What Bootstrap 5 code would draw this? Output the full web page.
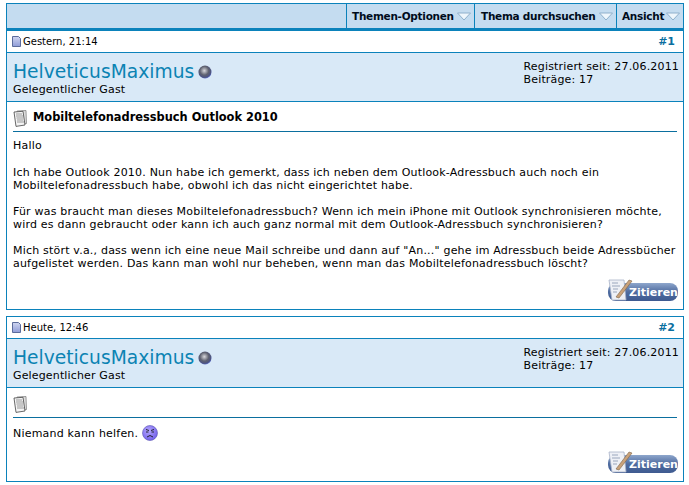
<!DOCTYPE html>
<html lang="de"><head><meta charset="utf-8"><title>Thread</title>
<link href="https://cdn.jsdelivr.net/npm/bootstrap@5.3.0/dist/css/bootstrap.min.css" rel="stylesheet">
<style>
html,body{background:#fff;overflow:hidden}
body{font:11px/13px "DejaVu Sans",Verdana,sans-serif;color:#000;padding:3px 5px 0 6px;width:689px;height:485px}
.tbar{height:28px;background:#c4dcf0;border:1px solid #0b82bb;border-bottom-width:3px}
.tbtn{height:100%;border-left:1px solid #0b82bb;font:bold 10.5px/24px "DejaVu Sans",sans-serif;padding:0 3px 0 5px;color:#000c1c;letter-spacing:-.28px}
.btn-a{width:128px}.btn-b{width:142px;padding-left:6px}.btn-c{width:67px}
.post{border:1px solid #0b82bb;border-top:0}
.post.second{border-top:1px solid #0b82bb;margin-top:6px}
.phead{height:22px;border-bottom:1px solid #0b82bb;padding:0 8px 0 5px;font-size:10px;line-height:21px}
.dateline{gap:2px}
.pnum{font-weight:700;font-size:11px;color:#0b6f9f}
.puser{height:49px;background:#d9e9f7;border-bottom:1px solid #0b82bb;padding:8px 4px 0 6px}
.uname{font-size:18.7px;line-height:21px;color:#0b83b3}
.urole{line-height:13px;margin-top:1px;letter-spacing:.15px}
.uinfo{line-height:13px;margin-top:-1px;letter-spacing:.17px}
.pbody{padding:7px 6px 7px 6px}
.ptitle{height:23px;border-bottom:1px solid #0b6f9f;font-weight:700;font-size:11.4px;gap:6px;padding-bottom:6px}
.ptitle svg{margin-top:3px}
.ptext{padding-top:7px;height:146px;letter-spacing:.2px}
.ptext p{margin:0 0 13px}
.ptext p:first-child{margin-bottom:14px}
.pfoot{height:24px;margin-right:-1px}
.second .ptext{height:32px;padding-top:9px}
.face{margin-top:-2px}
.zit{font:bold 11px "DejaVu Sans",sans-serif;fill:#fff}
</style></head><body>
<svg width="0" height="0" class="position-absolute"><defs>
 <radialGradient id="o1" cx=".45" cy=".4" r=".6"><stop offset="0" stop-color="#d8d8dc"/><stop offset=".55" stop-color="#5f6270"/><stop offset=".85" stop-color="#4d5480"/><stop offset="1" stop-color="#5a6cc8"/></radialGradient>
 <linearGradient id="p1" x1="0" y1="0" x2="0" y2="1"><stop offset="0" stop-color="#8ea6cc"/><stop offset=".5" stop-color="#4f6ca0"/><stop offset="1" stop-color="#3e5a90"/></linearGradient>
 <linearGradient id="d1" x1="0" y1="0" x2="0" y2="1"><stop offset="0" stop-color="#d0d6f0"/><stop offset="1" stop-color="#8f9cd8"/></linearGradient>
 <radialGradient id="s1" cx=".4" cy=".35" r=".7"><stop offset="0" stop-color="#b4a6ff"/><stop offset="1" stop-color="#6e5ce8"/></radialGradient>
 <symbol id="tri" viewBox="0 0 14 9"><path d="M.5 1h13L7 8z" fill="#eef6fc" stroke="#8fb0cc"/></symbol>
 <symbol id="doc" viewBox="0 0 9 11"><path d="M.5.5h6l2 2v8h-8z" fill="url(#d1)" stroke="#5c6c9c"/></symbol>
 <symbol id="orb" viewBox="0 0 15 15"><circle cx="7.5" cy="7.5" r="7" fill="url(#o1)"/></symbol>
 <symbol id="page" viewBox="0 0 14 17"><path d="M4 1l9-.5.5 13-9 .5z" fill="#ddd" stroke="#777" stroke-width=".7"/><path d="M1 2l9-.7 2 13.7-9 1.4z" fill="#f4f4f4" stroke="#444" stroke-width=".8"/><path d="M3 4h6M3 6h7M3.5 8h6.5M4 10h6M4 12h7" stroke="#999"/></symbol>
 <symbol id="btn" viewBox="0 0 71 24"><rect x="1" y="5" width="70" height="18" rx="8" fill="url(#p1)"/><path d="M2 2h15l2 20H5z" fill="#eef0f6" stroke="#a8b3c8" stroke-width=".8"/><path d="M5 5h6M5 8h8M6 11h5M6 14h4" stroke="#9aa6bc"/><path d="M9 19L22 2l3 1-13 17z" fill="#caa27a" stroke="#7d6448" stroke-width=".6"/></symbol>
</defs></svg>
<div class="tbar d-flex justify-content-end">
 <div class="tbtn btn-a d-flex align-items-center justify-content-between">Themen-Optionen<svg width="14" height="9"><use href="#tri"/></svg></div>
 <div class="tbtn btn-b d-flex align-items-center justify-content-between">Thema durchsuchen<svg width="14" height="9"><use href="#tri"/></svg></div>
 <div class="tbtn btn-c d-flex align-items-center justify-content-between">Ansicht<svg width="14" height="9"><use href="#tri"/></svg></div>
</div>
<div class="post">
 <div class="phead d-flex justify-content-between align-items-center">
  <span class="dateline d-flex align-items-center"><svg width="9" height="11"><use href="#doc"/></svg>Gestern, 21:14</span><span class="pnum">#1</span>
 </div>
 <div class="puser d-flex justify-content-between">
  <div><div class="d-flex align-items-center gap-1"><span class="uname">HelveticusMaximus</span><svg width="14" height="14"><use href="#orb"/></svg></div><div class="urole">Gelegentlicher Gast</div></div>
  <div class="uinfo">Registriert seit: 27.06.2011<br>Beiträge: 17</div>
 </div>
 <div class="pbody">
  <div class="ptitle d-flex align-items-center"><svg width="14" height="17"><use href="#page"/></svg>Mobiltelefonadressbuch Outlook 2010</div>
  <div class="ptext"><p>Hallo</p><p>Ich habe Outlook 2010. Nun habe ich gemerkt, dass ich neben dem Outlook-Adressbuch auch noch ein Mobiltelefonadressbuch habe, obwohl ich das nicht eingerichtet habe.</p><p>Für was braucht man dieses Mobiltelefonadressbuch? Wenn ich mein iPhone mit Outlook synchronisieren möchte, wird es dann gebraucht oder kann ich auch ganz normal mit dem Outlook-Adressbuch synchronisieren?</p><p>Mich stört v.a., dass wenn ich eine neue Mail schreibe und dann auf "An..." gehe im Adressbuch beide Adressbücher aufgelistet werden. Das kann man wohl nur beheben, wenn man das Mobiltelefonadressbuch löscht?</p></div>
  <div class="pfoot d-flex justify-content-end"><svg width="71" height="24"><use href="#btn"/><text class="zit" x="22" y="18">Zitieren</text></svg></div>
 </div>
</div>
<div class="post second">
 <div class="phead d-flex justify-content-between align-items-center">
  <span class="dateline d-flex align-items-center"><svg width="9" height="11"><use href="#doc"/></svg>Heute, 12:46</span><span class="pnum">#2</span>
 </div>
 <div class="puser d-flex justify-content-between">
  <div><div class="d-flex align-items-center gap-1"><span class="uname">HelveticusMaximus</span><svg width="14" height="14"><use href="#orb"/></svg></div><div class="urole">Gelegentlicher Gast</div></div>
  <div class="uinfo">Registriert seit: 27.06.2011<br>Beiträge: 17</div>
 </div>
 <div class="pbody">
  <div class="ptitle d-flex align-items-center"><svg width="14" height="17"><use href="#page"/></svg></div>
  <div class="ptext d-flex align-items-start gap-1"><span>Niemand kann helfen.</span><svg class="flex-shrink-0 face" width="16" height="16" viewBox="0 0 16 16"><circle cx="8" cy="8" r="7.5" fill="url(#s1)" stroke="#5a55b0" stroke-width=".6"/><path d="M4 4.5l3 1M12 4.5L9 5.5M4 7h2.5M9.5 7H12M5 12q3-3 6 0" stroke="#223" fill="none"/></svg></div>
  <div class="pfoot d-flex justify-content-end"><svg width="71" height="24"><use href="#btn"/><text class="zit" x="22" y="18">Zitieren</text></svg></div>
 </div>
</div>
</body></html>
